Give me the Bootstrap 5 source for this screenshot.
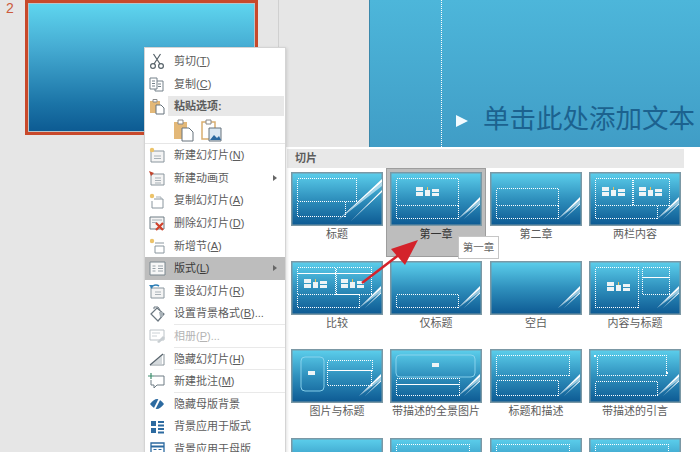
<!DOCTYPE html>
<html lang="zh-CN">
<head>
    <meta charset="UTF-8">
    <title>版式</title>
    <link rel="stylesheet" href="https://cdn.jsdelivr.net/npm/bootstrap@5.3.0/dist/css/bootstrap.min.css">
    <style>
        html, body { height: 100%; }
        body {
            background: #e6e6e6;
            font-family: "Liberation Sans", "Noto Sans CJK SC", sans-serif;
            font-size: 11px;
            color: #5c5c5c;
            overflow: hidden;
            position: relative;
        }
        .app-row { height: 452px; }
        .thumbs-pane { width: 279px; border-right: 1px solid #d0d0d0; padding: 0 20px 0 6px; height: 452px; }
        .slide-no { color: #cc5a3c; font-size: 14px; line-height: 14px; width: 19px; padding-top: 1px; }
        .slide-thumb {
            width: 233px; height: 135px;
            border: 3px solid #c8492b;
            outline: 1px solid #b9c4c9; outline-offset: -4px;
            background: linear-gradient(#5fd6ef, #45abd2 35%, #1b74a7 78%, #0c5a92);
        }
        .edit-pane { padding-left: 90px; }
        .big-slide {
            width: 331px; height: 147px;
            background: linear-gradient(#4db6da, #409dc6);
            border-left: 1px solid #3a88ab;
        }
        .guide-col { width: 72px; border-right: 1px dotted #fff; }
        .bullet-line { padding: 0 0 12px 14px; font-size: 26.5px; line-height: 32px; color: #1c628f; white-space: nowrap; }
        .bullet-tri { width: 0; height: 0; border-left: 12px solid #f2fbff; border-top: 6.5px solid transparent; border-bottom: 6.5px solid transparent; margin: 3px 15px 0 0; }

        .ctx-menu {
            position: absolute; left: 144px; top: 47px; width: 142px; height: 420px;
            background: #fff; border: 1px solid #d4d4d4; padding: 2px 0 0; border-radius: 0; min-width: 0;
            box-shadow: 1px 1px 3px rgba(0,0,0,.12);
            font-size: 11px; color: #5c5c5c;
        }
        .ctx-item { height: 22.6px; padding: 0 0 0 3px; color: #5c5c5c; font-size: 11px; white-space: nowrap; }
        .ctx-item svg { width: 18px; height: 18px; margin-right: 8px; flex: none; }
        .ctx-item.is-open { background: #bdbdbd; color: #3a3a3a; }
        .ctx-item.is-off { color: #b4b4b4; }
        .ctx-item.has-sep { background: linear-gradient(#e9e9e9, #e9e9e9) no-repeat 29px 100% / 100% 1px; }
        .ctx-arrow { margin-left: auto; margin-right: 8px; width: 0; height: 0; border-left: 4px solid #666; border-top: 3.5px solid transparent; border-bottom: 3.5px solid transparent; }
        .ctx-head { height: 20px; margin: 0 1px 0 2px; padding-left: 6px; background: #e8e8e8; font-weight: 700; color: #5c5c5c; line-height: 20px; }
        .ctx-pastehead { height: 20px; margin-top: 1px; }
        .ctx-pastehead svg { width: 18px; height: 18px; margin: 0 0 0 3px; flex: none; }
        .paste-row { height: 28px; padding-left: 28px; gap: 7px; background: linear-gradient(#e6e6e6, #e6e6e6) no-repeat 0 100% / 100% 1px; }
        .paste-row svg { width: 21px; height: 23px; }

        .layout-panel {
            position: absolute; left: 285px; top: 147px; width: 415px; height: 305px;
            background: #fff; border-left: 1px solid #d0d0d0; padding: 2px 0 0 1px; overflow: hidden;
        }
        .panel-title { width: 397px; height: 19px; background: #e8e8e8; padding-left: 8px; line-height: 19px; font-weight: 700; color: #5c5c5c; font-size: 11px; }
        .layout-grid { display: grid; grid-template-columns: 99px 100px 99px 100px; grid-template-rows: 89px 88px 89px 88px; }
        .layout-cell { padding: 4px 0 0 4px; text-align: center; color: #5c5c5c; font-size: 11px; line-height: 14px; }
        .layout-cell svg { display: block; width: 92px; height: 54px; }
        .layout-cell span { display: block; width: 92px; margin-top: 1px; }
        .layout-cell.is-current { background: #bdbdbd; box-shadow: inset 0 0 0 1px #9d9d9d; color: #333; }

        .hint-box { position: absolute; left: 458px; top: 236px; width: 41px; height: 23px; background: #fff; border: 1px solid #c6c6c6; color: #666; font-size: 10.5px; line-height: 21px; text-align: center; }
        .red-arrow { position: absolute; left: 355px; top: 232px; width: 70px; height: 58px; }
    </style>
</head>
<body>
    <svg width="0" height="0" class="position-absolute">
        <defs>
            <linearGradient id="bgGrad" x1="0" y1="0" x2="0" y2="1">
                <stop offset="0" stop-color="#5ccfec"/><stop offset=".5" stop-color="#2f90bd"/><stop offset="1" stop-color="#0d5a93"/>
            </linearGradient>
            <symbol id="i-cut" viewBox="0 0 18 18"><circle cx="5" cy="14" r="2.400" fill="none" stroke="#566269" stroke-width="1.200"/><circle cx="13" cy="14" r="2.400" fill="none" stroke="#566269" stroke-width="1.200"/><path d="M6 12 12.500 2M12 12 5.500 2" stroke="#566269" stroke-width="1.200" fill="none"/></symbol>
            <symbol id="i-copy" viewBox="0 0 18 18"><path d="M2 3h7v11H2z M9 6h6v10H7v-2" fill="#fff" stroke="#74818a"/><path d="M4 6h3M4 8.500h3M4 11h3M10 9h3M10 11.500h3" stroke="#74818a"/></symbol>
            <symbol id="i-paste" viewBox="0 0 18 18"><path d="M2 4h10v12H2z" fill="#e3b878"/><path d="M5 2.500h4V5H5z" fill="#fff" stroke="#8b8b8b"/><path d="M8 8h5l3 3v6H8z" fill="#fff" stroke="#66737c"/></symbol>
            <symbol id="i-new" viewBox="0 0 18 18"><path d="M3 5h13v11H3z" fill="#f4f4f4" stroke="#8a969e"/><path d="M6 10h7M6 12.500h7" stroke="#a8b1b7"/><circle cx="4" cy="4" r="2.200" fill="#ecc36a"/></symbol>
            <symbol id="i-anim" viewBox="0 0 18 18"><path d="M3 5h13v11H3z" fill="#f4f4f4" stroke="#8a969e"/><path d="M7 9h6M7 11.500h6M7 14h6" stroke="#a8b1b7"/><path d="M1 2l5 2-3 3z" fill="#c2452d"/></symbol>
            <symbol id="i-dup" viewBox="0 0 18 18"><path d="M6 7h9v9H4V9" fill="#fff" stroke="#8a969e"/><path d="M8 5h5v2" fill="none" stroke="#a8b1b7"/><circle cx="4" cy="4" r="2.200" fill="#ecc36a"/></symbol>
            <symbol id="i-del" viewBox="0 0 18 18"><path d="M2 3h14v12H2z" fill="#f4f4f4" stroke="#6f7c85"/><path d="M4 6h10M4 8.500h5" stroke="#a8b1b7"/><path d="M8 9l7 7M15 9l-7 7" stroke="#d0412b" stroke-width="2.200"/></symbol>
            <symbol id="i-sec" viewBox="0 0 18 18"><path d="M7 6h9M7 9h9v7H7z" fill="none" stroke="#8a969e"/><circle cx="4" cy="4" r="2.200" fill="#ecc36a"/></symbol>
            <symbol id="i-lay" viewBox="0 0 18 18"><path d="M2 3h15v13H2z" fill="#f7f7f7" stroke="#7b878f"/><path d="M4.500 7h3M4.500 9.500h3M4.500 12h3M10 7h5M10 9.500h5M10 12h5" stroke="#98a2a9"/></symbol>
            <symbol id="i-reset" viewBox="0 0 18 18"><path d="M3 6h13v10H3z" fill="#f4f4f4" stroke="#8a969e"/><path d="M7 10h6M7 12.500h6" stroke="#a8b1b7"/><path d="M3 6a5 4 0 0 1 8-2" fill="none" stroke="#2f7fb6" stroke-width="1.600"/><path d="M1 3l4 0-1 4z" fill="#2f7fb6"/></symbol>
            <symbol id="i-bg" viewBox="0 0 18 18"><path d="M3 9l6-6 7 6-6 7z" fill="#fff" stroke="#6b7780" stroke-width="1.200"/><path d="M6 4V2h4l2 3" fill="none" stroke="#6b7780"/><path d="M11 7h4v5h-3z" fill="#a8b1b7"/></symbol>
            <symbol id="i-album" viewBox="0 0 18 18"><path d="M2 3h14v10H2z" fill="#fff" stroke="#bcc3c8"/><path d="M4 6h8M4 9h5" stroke="#ccd2d6"/><path d="M9 15l6-6 2 2-6 5z" fill="#c8ced2"/></symbol>
            <symbol id="i-hide" viewBox="0 0 18 18"><path d="M2 15h14V4" fill="none" stroke="#8a959c"/><path d="M3 14 14 6v8z" fill="#d5dadd"/><path d="M2 15 15 4" stroke="#55616a" stroke-width="1.200"/></symbol>
            <symbol id="i-note" viewBox="0 0 18 18"><path d="M6 4h10v9H9l-3 3v-3H3V8" fill="#fff" stroke="#6f7c85"/><path d="M3 1v6M0 4h6" stroke="#3e8e6e" stroke-width="1.200"/></symbol>
            <symbol id="i-eye" viewBox="0 0 18 18"><path d="M2 9q4-5 7-5t7 5q-4 5-7 5t-7-5z" fill="#2c6aa0"/><path d="M6 15 12 3" stroke="#fff" stroke-width="1.800"/></symbol>
            <symbol id="i-grid" viewBox="0 0 18 18"><path d="M3 3h5v5H3zM3 10h5v5H3z" fill="#2c6aa0"/><path d="M10 3h6v2h-6zM10 6.500h6v2h-6zM10 10h6v2h-6zM10 13.500h6v2h-6z" fill="#2c6aa0"/></symbol>
            <symbol id="i-master" viewBox="0 0 18 18"><path d="M3 3h13v13H3z" fill="#fff" stroke="#2c6aa0" stroke-width="1.300"/><path d="M3 6.500h13" stroke="#2c6aa0" stroke-width="2"/><path d="M5.500 9.500h3M5.500 12.500h3M10.500 9.500h3M10.500 12.500h3" stroke="#2c6aa0"/></symbol>
        </defs>
    </svg>

    <div class="app-row d-flex">
        <div class="thumbs-pane d-flex">
            <div class="slide-no">2</div>
            <div class="slide-thumb"></div>
        </div>
        <div class="edit-pane">
            <div class="big-slide d-flex">
                <div class="guide-col"></div>
                <div class="d-flex align-items-end">
                    <div class="bullet-line d-flex align-items-center"><div class="bullet-tri"></div>单击此处添加文本</div>
                </div>
            </div>
        </div>
    </div>

    <div class="ctx-menu dropdown-menu d-block" id="ctxMenu"></div>

    <div class="layout-panel">
        <div class="panel-title">切片</div>
        <div class="layout-grid" id="layoutGrid"></div>
    </div>

    <div class="hint-box">第一章</div>

    <svg class="red-arrow" viewBox="0 0 70 58">
        <path d="M7 51 45 22" stroke="#d4232b" stroke-width="2.500" fill="none"/>
        <path d="M63 8 36 17 50 33z" fill="#d4232b"/>
    </svg>

    <script src="https://cdn.jsdelivr.net/npm/bootstrap@5.3.0/dist/js/bootstrap.bundle.min.js"></script>
    <script>
        // context menu rows: icon, label, access key, tail, flags
        const menuRows = [
            ['i-cut', '剪切(', 'T', ')'],
            ['i-copy', '复制(', 'C', ')'],
            'paste',
            ['i-new', '新建幻灯片(', 'N', ')'],
            ['i-anim', '新建动画页', '', '', 'sub'],
            ['i-dup', '复制幻灯片(', 'A', ')'],
            ['i-del', '删除幻灯片(', 'D', ')'],
            ['i-sec', '新增节(', 'A', ')'],
            ['i-lay', '版式(', 'L', ')', 'sub open'],
            ['i-reset', '重设幻灯片(', 'R', ')'],
            ['i-bg', '设置背景格式(', 'B', ')...', 'sep'],
            ['i-album', '相册(', 'P', ')...', 'off sep'],
            ['i-hide', '隐藏幻灯片(', 'H', ')', 'sep'],
            ['i-note', '新建批注(', 'M', ')', 'sep'],
            ['i-eye', '隐藏母版背景', '', ''],
            ['i-grid', '背景应用于版式', '', ''],
            ['i-master', '背景应用于母版', '', ''],
        ];
        const icon = id => `<svg><use href="#${id}"/></svg>`;
        document.getElementById('ctxMenu').innerHTML = menuRows.map(row => {
            if (row === 'paste') {
                return `<div class="ctx-pastehead d-flex align-items-center">${icon('i-paste')}<div class="ctx-head flex-grow-1">粘贴选项:</div></div>
                <div class="paste-row d-flex align-items-center">
                    <svg viewBox="0 0 21 23"><path d="M1 3h13v17H1z" fill="#e3b878"/><path d="M5 1h5v4H5z" fill="#fff" stroke="#888"/><path d="M9 9h7l4 4v9H9z" fill="#fff" stroke="#66737c"/></svg>
                    <svg viewBox="0 0 21 23"><path d="M1 3h13v17H1z" fill="#fff" stroke="#d9ae70" stroke-width="1.500"/><path d="M5 1h5v4H5z" fill="#fff" stroke="#888"/><path d="M8 9h12v13H8z" fill="#dbe8f2" stroke="#66737c"/><path d="M9 21l4-5 3 3 2-2 2 4z" fill="#2c6aa0"/></svg>
                </div>`;
            }
            const flags = row[4] || '';
            const cls = ['ctx-item', 'dropdown-item', 'd-flex', 'align-items-center'];
            if (flags.includes('open')) cls.push('is-open');
            if (flags.includes('off')) cls.push('is-off');
            if (flags.includes('sep')) cls.push('has-sep');
            const key = row[2] ? `<u>${row[2]}</u>${row[3]}` : '';
            const arrow = flags.includes('sub') ? '<i class="ctx-arrow"></i>' : '';
            return `<div class="${cls.join(' ')}">${icon(row[0])}<span>${row[1]}${key}</span>${arrow}</div>`;
        }).join('');

        // dotted placeholders per layout: [x1, y1, x2, y2]; "pics" are the little content glyph groups
        const TALL = [6, 6, 68, 33], LOW = [6, 33, 68, 46];
        const layouts = [
            { name: '标题', dots: [[6, 6, 65, 29], [6, 29, 54, 44]], wide: true },
            { name: '第一章', dots: [TALL, LOW], pics: [[26, 15]], current: true },
            { name: '第二章', dots: [[6, 16, 68, 33], LOW] },
            { name: '两栏内容', dots: [[6, 6, 43, 33], [44, 6, 80, 33], LOW], pics: [[13, 15], [50, 15]] },
            { name: '比较', dots: [[6, 6, 44, 12], [6, 12, 44, 33], [45, 6, 80, 12], [45, 12, 80, 33], LOW], pics: [[13, 18], [50, 18]] },
            { name: '仅标题', dots: [LOW] },
            { name: '空白', dots: [] },
            { name: '内容与标题', dots: [[6, 6, 49, 46], [53, 6, 80, 16], [53, 16, 80, 33]], pics: [[18, 21]] },
            { name: '图片与标题', dots: [[36, 11, 81, 21], [36, 21, 80, 36]], frame: [10, 8, 33, 42], dot: [17, 22] },
            { name: '带描述的全景图片', dots: [[6, 29, 69, 35], [6, 35, 69, 46]], frame: [6, 6, 85, 28], dot: [42, 14] },
            { name: '标题和描述', dots: [[6, 6, 79, 26], [6, 31, 68, 46]] },
            { name: '带描述的引言', dots: [[8, 6, 77, 26], [6, 32, 68, 46]], marks: [[6, 7], [78, 24]] },
            { name: '', dots: [] },
            { name: '', dots: [[6, 6, 79, 26]] },
            { name: '', dots: [[6, 6, 79, 26]] },
            { name: '', dots: [[6, 6, 79, 26]] },
        ];

        const rectDots = ([x1, y1, x2, y2]) =>
            `<rect x="${x1 + .5}" y="${y1 + .5}" width="${x2 - x1}" height="${y2 - y1}" fill="none" stroke="#fff" stroke-width="1" stroke-dasharray="1 1" shape-rendering="crispEdges"/>`;
        const glyphs = ([x, y]) =>
            `<path d="M${x} ${y}h7v4h-7zM${x} ${y + 5}h7v4h-7zM${x + 9} ${y + 3}h5v6h-5zM${x + 16} ${y + 2}h7v3h-7zM${x + 16} ${y + 6}h7v3h-7z" fill="#eef4f6"/><path d="M${x + 11} ${y}h1v3h-1z" fill="#e8c15c"/>`;

        document.getElementById('layoutGrid').innerHTML = layouts.map(t => {
            let art = (t.dots || []).map(rectDots).join('') + (t.pics || []).map(glyphs).join('');
            if (t.frame) {
                const [a, b, c, d] = t.frame;
                art += `<rect x="${a}" y="${b}" width="${c - a}" height="${d - b}" rx="4" fill="none" stroke="#8fd6ee" stroke-width=".9"/>`;
                art += `<rect x="${t.dot[0]}" y="${t.dot[1]}" width="7" height="4" fill="#eef4f6"/>`;
            }
            (t.marks || []).forEach(([x, y]) => { art += `<rect x="${x - 1}" y="${y - 1}" width="2" height="2" fill="#fff"/>`; });
            const swoosh = t.wide
                ? '<path d="M46 49 91 7v3zM60 49 91 18v2z" fill="#fff"/><path d="M46 49 91 10 91 14z" fill="#cfeaf5" opacity=".75"/>'
                : '<path d="M68 47 90 25v3zM74 47 90 31v1.500z" fill="#fff"/><path d="M68 47 90 28 90 31z" fill="#cfeaf5" opacity=".7"/>';
            return `<div class="layout-cell${t.current ? ' is-current' : ''}">
                <svg viewBox="0 0 92 54"><rect x=".75" y=".75" width="90.500" height="52.500" fill="url(#bgGrad)" stroke="#7b98a5" stroke-width="1.500"/>${swoosh}${art}</svg>
                <span>${t.name}</span>
            </div>`;
        }).join('');
    </script>
</body>
</html>
